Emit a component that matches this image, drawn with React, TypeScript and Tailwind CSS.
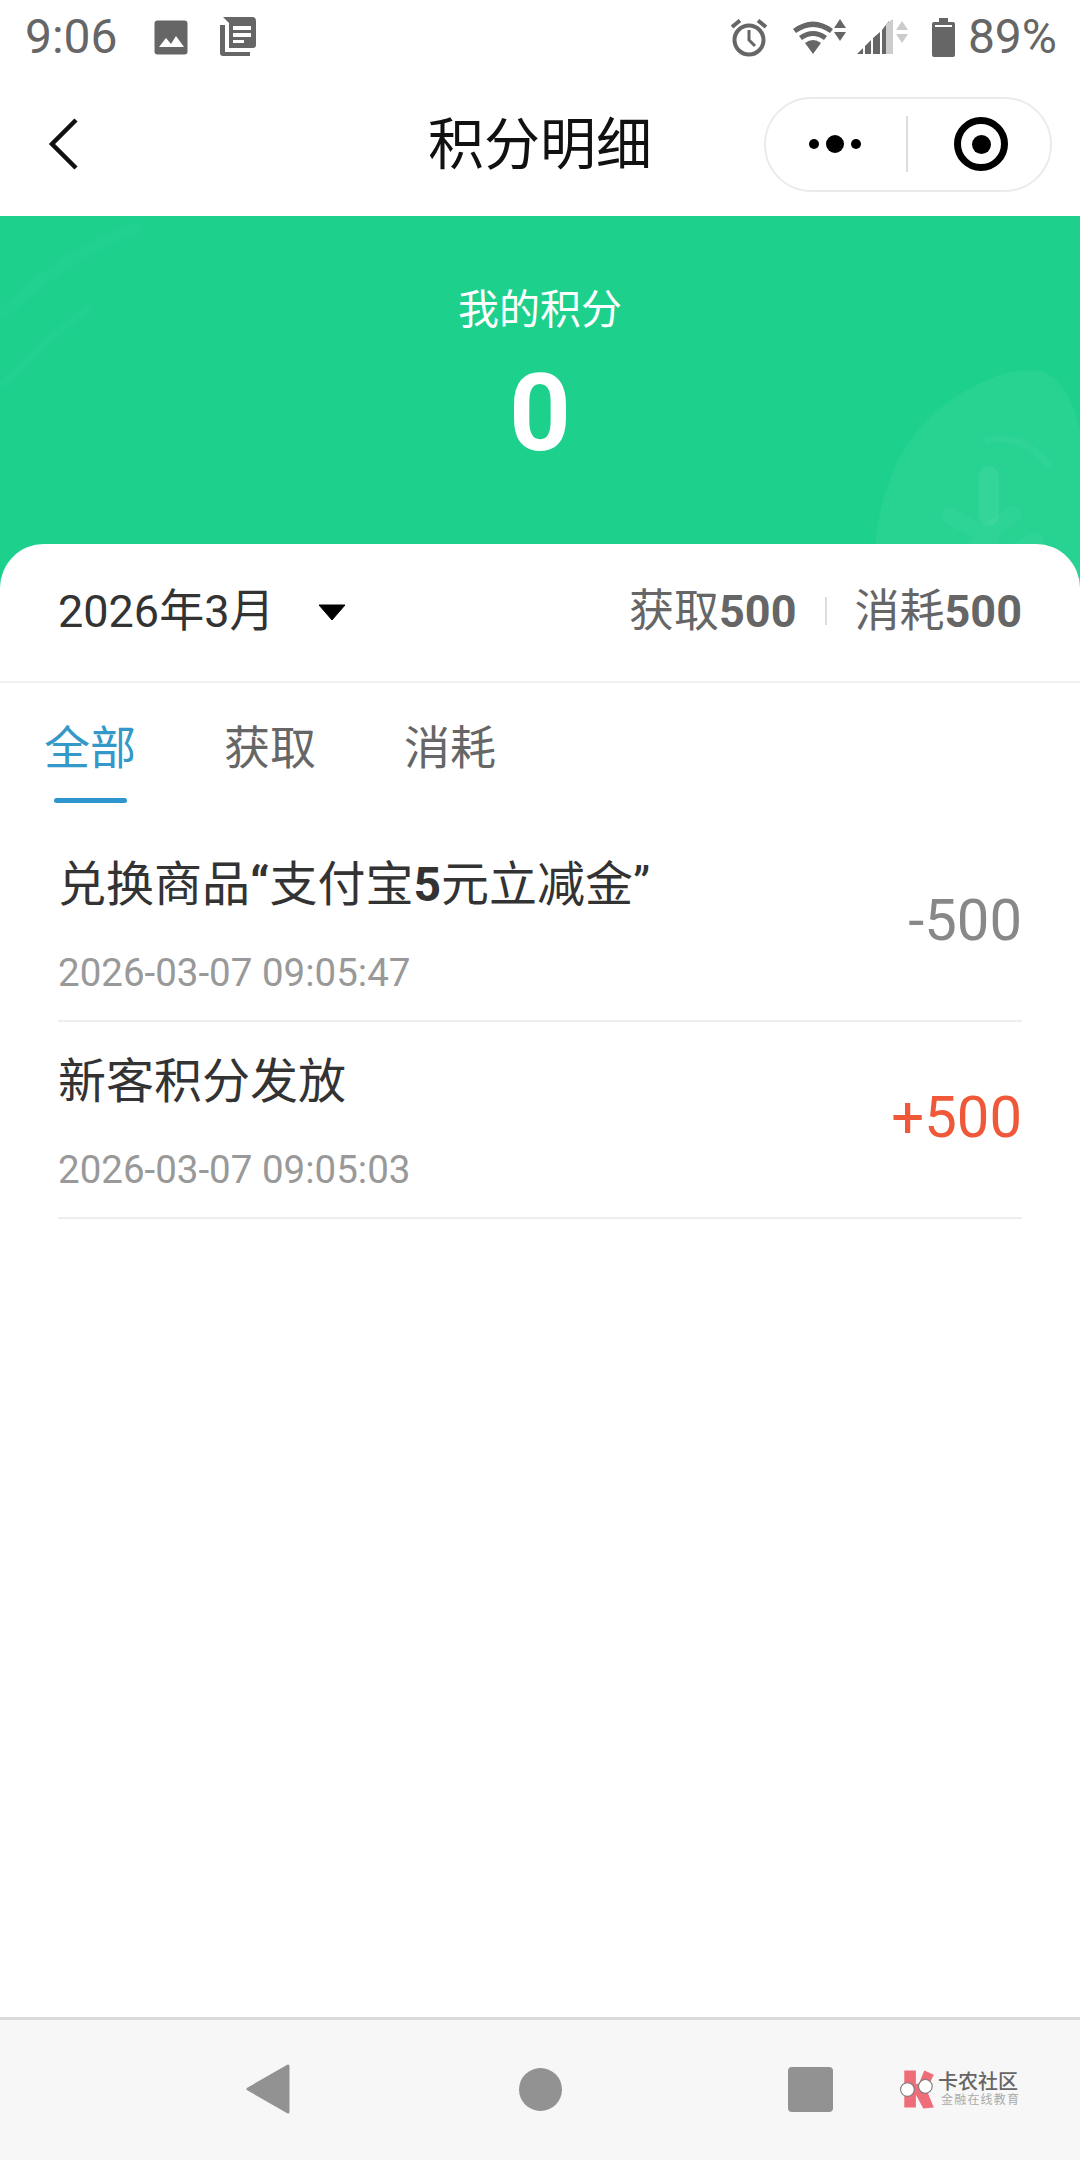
const font = 'font-["Roboto","Noto_Sans_CJK_SC",sans-serif]'

const records = [
  {
    title: (
      <>
        兑换商品<b className="font-bold">“</b>支付宝<b className="font-bold">5</b>元立减金”
      </>
    ),
    time: '2026-03-07 09:05:47',
    amount: '-500',
    color: 'text-[#888888]',
  },
  {
    title: <>新客积分发放</>,
    time: '2026-03-07 09:05:03',
    amount: '+500',
    color: 'text-[#f0583a]',
  },
]

function StatusBar() {
  return (
    <div className="flex h-[72px] items-center justify-between pl-[25px] pr-[23px] pt-[2px] text-[48px] text-[#666666]">
      <div className="flex items-center">
        <span className="leading-none">9:06</span>
        <svg className="ml-[36px]" width="34" height="35" viewBox="0 0 34 35">
          <rect width="33" height="34" x="0.5" y="0.5" rx="3" fill="#666666" />
          <path d="M5 27l7-9 5 6 5-8 8 11z" fill="#ffffff" />
        </svg>
        <svg className="ml-[30px] mt-[-2px]" width="38" height="39" viewBox="0 0 38 39">
          <path d="M3 8h4v27h25v4H5a3 3 0 0 1-3-3V8z" fill="#666666" />
          <path d="M5 0h29a4 4 0 0 1 4 4v24a3 3 0 0 1-3 3H11V6z" fill="#666666" />
          <path d="M15 9h18v4H15zM15 16h18v4H15zM15 23h11v3H15z" fill="#ffffff" />
        </svg>
      </div>
      <div className="flex items-center">
        <svg width="38" height="39" viewBox="0 0 38 39" fill="none" stroke="#666666">
          <circle cx="19" cy="22" r="14.5" strokeWidth="4" />
          <path d="M19 12v10l6 6" strokeWidth="3" />
          <path d="M2 9l8-6.500M36 9l-8-6.500" strokeWidth="4" />
        </svg>
        <svg className="ml-[24px]" width="56" height="36" viewBox="0 0 54 36" fill="#666666">
          <path d="M0 10Q20-5 40 10l-3 4Q20 2 3 14z" />
          <path d="M6 17Q20 7 34 17l-3 4Q20 13 9 21z" />
          <path d="M12 24Q20 18 28 24L20 35z" />
          <path d="M47 0l6 9H41zM47 22l-6-9h12z" />
        </svg>
        <svg className="ml-[8px]" width="54" height="36" viewBox="0 0 52 36">
          <path d="M0 35l6-6v6zM8 27l6-6v14H8zM16 19l7-6v22h-7z" fill="#666666" />
          <path d="M25 11l7-9v33h-7z" fill="#666666" />
          <path d="M29 5l7-5v35h-7z" fill="#cccccc" />
          <path d="M45 2l6 9H39zM45 24l-6-9h12z" fill="#cccccc" />
        </svg>
        <svg className="ml-[22px]" width="23" height="39" viewBox="0 0 23 39">
          <path d="M7 0h9v4h5a2 2 0 0 1 2 2v31a2 2 0 0 1-2 2H2a2 2 0 0 1-2-2V6a2 2 0 0 1 2-2h5z" fill="#666666" />
          <rect x="3" y="7" width="17" height="2" fill="#ffffff" />
        </svg>
        <span className="ml-[13px] leading-none">89%</span>
      </div>
    </div>
  )
}

function NavBar() {
  return (
    <div className="grid h-[144px] grid-cols-[1fr_auto_1fr] items-center">
      <svg className="ml-[48px]" width="32" height="52" viewBox="0 0 32 52" fill="none" stroke="#111111" strokeWidth="4.500">
        <path d="M28 2L4 26l24 24" />
      </svg>
      <div className="mt-[1px] text-[56px] leading-none text-[#111111]">积分明细</div>
      <div className="mr-[28px] flex h-[95px] w-[288px] items-center justify-self-end rounded-full border-2 border-[#ebebeb] bg-white">
        <div className="flex w-[140px] items-center justify-center gap-[7px] pr-[2px]">
          <span className="h-[10px] w-[10px] rounded-full bg-black" />
          <span className="h-[18px] w-[18px] rounded-full bg-black" />
          <span className="h-[10px] w-[10px] rounded-full bg-black" />
        </div>
        <div className="h-[56px] w-[2px] bg-[#dddddd]" />
        <div className="flex flex-1 items-center justify-center pl-[4px]">
          <span className="flex h-[54px] w-[54px] items-center justify-center rounded-full border-[7px] border-black">
            <span className="h-[19px] w-[19px] rounded-full bg-black" />
          </span>
        </div>
      </div>
    </div>
  )
}

function Hero() {
  return (
    <div className="relative flex h-[374px] flex-col items-center overflow-hidden bg-[#1dd18d] text-white">
      <svg className="absolute inset-0" width="1080" height="374" viewBox="0 0 1080 374" fill="none">
        <path d="M0 100Q60 40 140 10" stroke="#ffffff" strokeOpacity="0.02" strokeWidth="12" />
        <path d="M0 170Q40 130 90 90" stroke="#ffffff" strokeOpacity="0.02" strokeWidth="8" />
        <path d="M875 330Q885 230 950 185Q1000 150 1040 155Q1070 165 1080 215V374H880Z" fill="#ffffff" fillOpacity="0.05" />
        <path d="M985 225Q1020 215 1050 250" stroke="#ffffff" strokeOpacity="0.03" strokeWidth="7" />
        <path d="M989 260v40" stroke="#ffffff" strokeOpacity="0.06" strokeWidth="20" strokeLinecap="round" />
        <path d="M950 300l35 18 28-20M990 320l-30 25M990 350l45-25M990 320v50" stroke="#ffffff" strokeOpacity="0.03" strokeWidth="17" strokeLinecap="round" />
      </svg>
      <div className="relative mt-[71px] text-[41px] leading-[46px]">我的积分</div>
      <div className="relative mt-[26px] text-[108px] font-bold leading-[108px]">0</div>
    </div>
  )
}

function Summary() {
  return (
    <div className="flex h-[139px] items-center justify-between border-b-2 border-[#f0f0f0] px-[58px] pb-[3px] text-[45px] leading-none">
      <div className="flex items-center text-[#333333]">
        <span>2026年3月</span>
        <svg className="ml-[44px] mt-[2px]" width="28" height="17" viewBox="0 0 28 17">
          <path d="M1 1h26L14 16z" fill="#000000" stroke="#000000" strokeLinejoin="round" />
        </svg>
      </div>
      <div className="flex items-center text-[#666666]">
        <span>
          获取<b className="font-bold">500</b>
        </span>
        <span className="mx-[28px] h-[28px] w-[2px] bg-[#dddddd]" />
        <span>
          消耗<b className="font-bold">500</b>
        </span>
      </div>
    </div>
  )
}

function Tabs() {
  return (
    <div className="flex h-[122px] gap-[88px] pl-[44px] text-[46px] leading-none text-[#666666]">
      <div className="flex flex-col items-center pt-[42px] text-[#3498c8]">
        <span>全部</span>
        <span className="mt-[27px] h-[5px] w-[73px] rounded-full bg-[#2e96cc]" />
      </div>
      <div className="pt-[42px]">获取</div>
      <div className="pt-[42px]">消耗</div>
    </div>
  )
}

function RecordRow({ title, time, amount, color }: (typeof records)[number]) {
  return (
    <div className="flex h-[197px] items-center justify-between border-b-2 border-[#eeeeee]">
      <div className="pt-[2px]">
        <div className="text-[48px] leading-[60px] text-[#333333]">{title}</div>
        <div className="mt-[39px] text-[38.5px] leading-none text-[#999999]">{time}</div>
      </div>
      <div className={`mb-[5px] text-[58px] leading-none ${color}`}>{amount}</div>
    </div>
  )
}

function BottomNav() {
  return (
    <div className="flex h-[143px] items-center border-t-[3px] border-[#d9d9d9] bg-[#f7f7f7] pb-[2px]">
      <svg className="ml-[245px]" width="45" height="50" viewBox="0 0 45 50">
        <path d="M43 2v46L3 25z" fill="#929292" stroke="#929292" strokeWidth="3" strokeLinejoin="round" />
      </svg>
      <span className="ml-[229px] h-[43px] w-[43px] rounded-full bg-[#929292]" />
      <span className="ml-[226px] h-[45px] w-[45px] rounded-[4px] bg-[#929292]" />
      <div className="ml-[66px] flex items-center">
        <svg width="38" height="40" viewBox="0 0 36 37">
          <path d="M5 1h11v13l3-1 5-12 9 4-7 14 7 17-10 1-7-13v12H5z" fill="#ee6d78" />
          <circle cx="8" cy="19" r="6.500" fill="#ffffff" stroke="#777777" />
          <circle cx="25" cy="16" r="6.500" fill="#ffffff" stroke="#777777" />
        </svg>
        <div className="ml-[1px] flex flex-col">
          <span className="text-[20px] font-medium leading-[22px] text-[#666666]">卡农社区</span>
          <span className="ml-[3px] text-[12px] leading-[14px] tracking-[1.2px] text-[#aaaaaa]">金融在线教育</span>
        </div>
      </div>
    </div>
  )
}

export default function App() {
  return (
    <div className={`flex h-[2160px] w-[1080px] flex-col bg-white ${font}`}>
      <StatusBar />
      <NavBar />
      <Hero />
      <div className="relative -mt-[46px] flex flex-1 flex-col rounded-t-[44px] bg-white">
        <Summary />
        <Tabs />
        <div className="mx-[58px] mt-[20px]">
          {records.map(r => (
            <RecordRow key={r.time} {...r} />
          ))}
        </div>
      </div>
      <BottomNav />
    </div>
  )
}
